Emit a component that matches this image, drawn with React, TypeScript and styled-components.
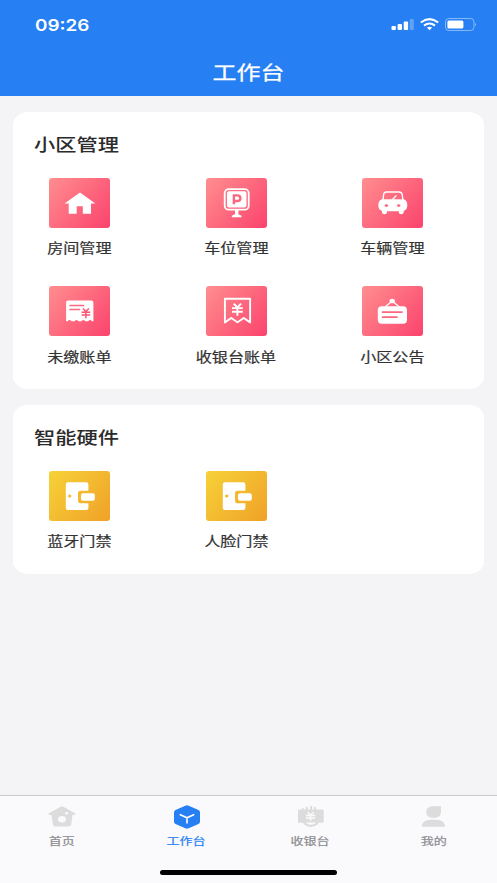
import React from 'react';
import styled, { createGlobalStyle } from 'styled-components';

const GlobalStyle = createGlobalStyle`
  * { box-sizing: border-box; }
  body { margin: 0; background: #f4f4f7; }
`;

const Page = styled.div`
  display: flex;
  flex-direction: column;
  width: 497px;
  height: 883px;
  overflow: hidden;
  background: #f4f4f7;
  font-family: 'Noto Sans CJK SC', 'Liberation Sans', sans-serif;
`;

const Header = styled.header`
  height: 96px;
  flex: none;
  background: #2680f3;
  color: #fff;
`;

const StatusBar = styled.div`
  display: flex;
  align-items: center;
  justify-content: space-between;
  height: 49px;
  padding: 0 20px 0 35px;
`;

const Time = styled.div`
  font: 600 16px/20px Inter, 'Liberation Sans', sans-serif;
  transform: scaleX(1.18);
  transform-origin: left center;
`;

const StatusIcons = styled.div`
  display: flex;
  align-items: center;
  gap: 6px;
  svg { display: block; }
`;

/* Wide lettering shared by every heading and caption */
const Wide = styled.span<{ $from?: string }>`
  display: inline-block;
  white-space: nowrap;
  transform: scaleX(1.22);
  transform-origin: ${(p) => p.$from ?? 'center'};
`;

const NavTitle = styled.h1`
  margin: 0;
  font-size: 19.7px;
  font-weight: 400;
  line-height: 46px;
  text-align: center;
  -webkit-text-stroke: 0.25px currentColor;
`;

const Main = styled.main`
  flex: 1;
  display: flex;
  flex-direction: column;
  gap: 16px;
  padding: 16px 13px;
`;

const Card = styled.section<{ $height: number }>`
  height: ${(p) => p.$height}px;
  padding: 19px 0 0 20.5px;
  border-radius: 15px / 13px;
  background: #fff;
`;

const CardTitle = styled.h2`
  margin: 0 0 21.6px;
  font-size: 17.4px;
  font-weight: 500;
  line-height: 25px;
  color: #2b2b2b;
`;

const Grid = styled.div`
  display: grid;
  grid-template-columns: repeat(3, 61px);
  column-gap: 95.5px;
  row-gap: 28.5px;
  padding-left: 15.5px;
`;

const Entry = styled.div`
  display: flex;
  flex-direction: column;
  align-items: center;
  height: 80px;
`;

const Tile = styled.div<{ $tone: 'pink' | 'gold' }>`
  width: 61px;
  height: 50px;
  flex: none;
  border-radius: 3px;
  background: ${(p) =>
    p.$tone === 'pink'
      ? 'linear-gradient(130deg, #ff8e8f 0%, #fb436d 100%)'
      : 'linear-gradient(130deg, #f6d238 0%, #f0a128 100%)'};
  svg { display: block; }
`;

const Label = styled.div`
  margin-top: 10.5px;
  font-size: 13.2px;
  font-weight: 400;
  line-height: 20px;
  color: #333;
  -webkit-text-stroke: 0.2px currentColor;
`;

const TabBar = styled.nav`
  flex: none;
  height: 88px;
  display: flex;
  flex-direction: column;
  justify-content: space-between;
  align-items: center;
  border-top: 1px solid #c9c9cc;
  background: #fafafc;
`;

const Tabs = styled.div`
  display: grid;
  grid-template-columns: repeat(4, 124px);
  width: 497px;
`;

const Tab = styled.div<{ $active?: boolean }>`
  display: flex;
  flex-direction: column;
  align-items: center;
  padding-top: 8.5px;
  font-size: 10.7px;
  line-height: 16px;
  color: ${(p) => (p.$active ? '#2680f3' : '#8c8c8f')};
  -webkit-text-stroke: 0.2px currentColor;
  svg { display: block; margin-bottom: 4px; }
`;

const HomeIndicator = styled.div`
  width: 177px;
  height: 5px;
  margin-bottom: 8px;
  border-radius: 3px;
  background: #000;
`;

const PINK = '#fb6880';

const Yen = ({ x, y, w, h, color, stroke }: { x: number; y: number; w: number; h: number; color: string; stroke: number }) => (
  <path
    d={`M${x + w * 0.16} ${y} L${x + w / 2} ${y + h * 0.32} L${x + w * 0.84} ${y} M${x + w / 2} ${y + h * 0.32} V${y + h} M${x} ${y + h * 0.37} H${x + w} M${x} ${y + h * 0.67} H${x + w}`}
    fill="none"
    stroke={color}
    strokeWidth={stroke}
  />
);

const Glyph = ({ children }: { children: React.ReactNode }) => (
  <svg width="61" height="50" viewBox="0 0 61 50" fill="#fff">{children}</svg>
);

const HouseIcon = () => (
  <Glyph>
    <path d="M31 14.5 L46.3 25.6 H42 V35.7 H33.8 V28.3 H27.7 V35.7 H19.7 V25.6 H15.5 Z" />
  </Glyph>
);

const ParkingIcon = () => (
  <Glyph>
    <rect x="18.7" y="11.1" width="24" height="20.6" rx="4" fill="none" stroke="#fff" strokeWidth="1.8" />
    <rect x="21" y="13.2" width="19.5" height="16.4" rx="2" />
    <path d="M27.9 26.3 V17.4 H31.4 C35.4 17.4 35.4 23 31.4 23 H28" fill="none" stroke={PINK} strokeWidth="2.4" />
    <path d="M29 31.5 H32.4 V36.2 L35.5 37.7 V39.2 H25.8 V37.7 L29 36.2 Z" />
  </Glyph>
);

const CarIcon = () => (
  <Glyph>
    <path d="M21 22 L21.6 16.5 Q22 14 24.5 14 H37 Q39.7 14 40.2 16.5 L40.9 22" fill="none" stroke="#fff" strokeWidth="1.4" />
    <path d="M30.5 21.5 L34.4 17.6" stroke="#fff" strokeWidth="1.4" />
    <path d="M20 21.2 H41.6 Q45.3 22 45.3 27.5 Q45.3 31.5 41.7 33 V34.3 Q41.7 36.3 39.2 36.3 Q36.8 36.3 36.8 34.3 V33.3 H25 V34.3 Q25 36.3 22.5 36.3 Q20 36.3 20 34.3 V33 Q16.3 31.5 16.3 27.5 Q16.3 22 20 21.2 Z" />
    <ellipse cx="24.4" cy="27.6" rx="1.7" ry="1.4" fill={PINK} />
    <ellipse cx="36.7" cy="27.6" rx="1.7" ry="1.4" fill={PINK} />
  </Glyph>
);

const BillIcon = () => (
  <Glyph>
    <path d="M19 14.4 H42.4 Q44.4 14.4 44.4 16.4 V35.3 H43 Q41.2 32.7 39.3 35.3 H36.2 Q34.4 32.7 32.5 35.3 H29.4 Q27.5 32.7 25.6 35.3 H22.4 Q20.5 32.7 18.6 35.3 H17.1 V16.4 Q17.1 14.4 19 14.4 Z" />
    <path d="M21 19.4 H34.6 M21 23.6 H30.5" stroke={PINK} strokeWidth="1.5" strokeLinecap="round" />
    <Yen x={32.6} y={22.5} w={8.6} h={9.8} color="#fb5574" stroke={1.5} />
  </Glyph>
);

const ReceiptIcon = () => (
  <Glyph>
    <path d="M18.9 12.8 H44.1 V36.4 L37.8 32 L31.5 36.2 L25.2 32 L18.9 36.4 Z" fill="none" stroke="#fff" strokeWidth="1.9" strokeLinejoin="round" />
    <Yen x={26} y={17.6} w={10.8} h={12.2} color="#fff" stroke={1.9} />
  </Glyph>
);

const NoticeIcon = () => (
  <Glyph>
    <path d="M23.3 20.8 L30.2 15 L37.2 20.8" fill="none" stroke="#fff" strokeWidth="1.3" />
    <ellipse cx="30.2" cy="15" rx="2.7" ry="2.3" />
    <rect x="15.8" y="20.2" width="29.2" height="17.5" rx="4" />
    <path d="M20.5 26.1 H40 M20.5 31.1 H35" stroke={PINK} strokeWidth="1.7" strokeLinecap="round" />
  </Glyph>
);

const DoorIcon = () => (
  <Glyph>
    <path d="M19 11.3 H37.3 Q39.4 11.3 39.4 13.4 V19.7 H31.4 Q29 19.7 29 22 V30 Q29 32.3 31.4 32.3 H39.4 V37 Q39.4 39 37.3 39 H19 Q16.8 39 16.8 37 V13.4 Q16.8 11.3 19 11.3 Z" />
    <rect x="32" y="22.3" width="13.8" height="7.4" rx="2" />
    <ellipse cx="20.7" cy="25" rx="1.7" ry="1.5" fill="#f3bc30" />
  </Glyph>
);

const TabGlyph = ({ children }: { children: React.ReactNode }) => (
  <svg width="30" height="24" viewBox="0 0 30 24" fill="#dcdcdd">{children}</svg>
);

const TabHome = () => (
  <TabGlyph>
    <path d="M13.7 1.7 Q15 .8 16.3 1.7 L28.6 8.6 Q29.1 9.6 27.5 9.8 L25.5 10.1 L24.2 19.6 Q23.9 21.6 21.5 21.6 H8.5 Q6.2 21.6 5.9 19.6 L4.5 10.1 L2.2 9.8 Q.8 9.5 1.5 8.6 Z" />
    <ellipse cx="15" cy="14.2" rx="4" ry="3.3" fill="#fafafc" />
    <ellipse cx="19.6" cy="8.2" rx="1.5" ry="1.2" fill="#fafafc" />
  </TabGlyph>
);

const TabWork = () => (
  <TabGlyph>
    <path d="M14.3 .7 Q16 -.1 17.7 .7 L27.5 5.1 Q29 5.9 29 7.3 V16.7 Q29 18.1 27.5 18.9 L17.7 23.3 Q16 24.1 14.3 23.3 L4.5 18.9 Q3 18.1 3 16.7 V7.3 Q3 5.9 4.5 5.1 Z" fill="#2680f3" />
    <path d="M9.3 9.7 L16 12.8 L22.7 9.7 M16 12.8 V18" fill="none" stroke="#fff" strokeWidth="1.6" strokeLinecap="round" />
  </TabGlyph>
);

const TabCash = () => (
  <TabGlyph>
    <path d="M7.8 6 V4 M11.8 6 V2.7 M16.2 6 V1.7 M20 6 V2.7" stroke="#dcdcdd" strokeWidth="2" strokeLinecap="round" />
    <path d="M4 4.5 H27.7 Q28.7 4.5 28.7 5.5 V16.8 Q28.7 17.8 27.7 17.8 H23.7 Q21.5 21.9 15.8 21.9 Q10.2 21.9 8 17.8 H4 Q3 17.8 3 16.8 V5.5 Q3 4.5 4 4.5 Z" />
    <Yen x={11} y={7.2} w={9.2} h={8.8} color="#fafafc" stroke={1.5} />
    <path d="M10.5 17.6 H21.3 Q19.5 19.8 15.9 19.8 Q12.4 19.8 10.5 17.6 Z" fill="#fafafc" />
  </TabGlyph>
);

const TabMe = () => (
  <TabGlyph>
    <path d="M22 1.2 V7.2 Q21.5 12.9 14.5 12.9 Q7.2 12.9 7.2 7.1 Q7.2 1.2 14.8 1.2 Z" />
    <path d="M2.8 21.8 Q3.2 14.8 12 14.8 H17 Q25.5 14.8 26 21.8 Z" />
  </TabGlyph>
);

const Signal = () => (
  <svg width="23" height="13" viewBox="0 0 23 13" fill="#fff">
    <rect x=".5" y="8" width="4.4" height="4" rx="1" />
    <rect x="6.6" y="6" width="4.4" height="6" rx="1" />
    <rect x="12.7" y="3.6" width="4.4" height="8.4" rx="1" />
    <rect x="18.7" y="1" width="4.1" height="11" rx="1" opacity=".27" />
  </svg>
);

const Wifi = () => (
  <svg width="19" height="13" viewBox="0 0 19 13" fill="none" stroke="#fff" strokeWidth="2.1">
    <path d="M.8 4.5 Q9.5 -2.2 18.2 4.5" />
    <path d="M4 7.6 Q9.5 3.4 15 7.6" />
    <path d="M6.8 9.6 Q9.5 7.8 12.2 9.6 L9.5 12.2 Z" fill="#fff" stroke="none" />
  </svg>
);

const Battery = () => (
  <svg width="32" height="13" viewBox="0 0 32 13">
    <rect x=".5" y=".5" width="28.5" height="12" rx="3.4" fill="none" stroke="#fff" strokeOpacity=".45" />
    <rect x="2.4" y="2.4" width="16" height="8.2" rx="1.6" fill="#fff" />
    <path d="M30.2 4.7 Q32 6.5 30.2 8.4 Z" fill="#fff" opacity=".55" />
  </svg>
);

type Item = { label: string; Icon: () => React.ReactElement };

const community: Item[] = [
  { label: '房间管理', Icon: HouseIcon },
  { label: '车位管理', Icon: ParkingIcon },
  { label: '车辆管理', Icon: CarIcon },
  { label: '未缴账单', Icon: BillIcon },
  { label: '收银台账单', Icon: ReceiptIcon },
  { label: '小区公告', Icon: NoticeIcon },
];

const hardware: Item[] = [
  { label: '蓝牙门禁', Icon: DoorIcon },
  { label: '人脸门禁', Icon: DoorIcon },
];

const tabs: Item[] = [
  { label: '首页', Icon: TabHome },
  { label: '工作台', Icon: TabWork },
  { label: '收银台', Icon: TabCash },
  { label: '我的', Icon: TabMe },
];

const Section = ({ title, items, tone, height }: { title: string; items: Item[]; tone: 'pink' | 'gold'; height: number }) => (
  <Card $height={height}>
    <CardTitle><Wide $from="left center">{title}</Wide></CardTitle>
    <Grid>
      {items.map(({ label, Icon }) => (
        <Entry key={label}>
          <Tile $tone={tone}><Icon /></Tile>
          <Label><Wide>{label}</Wide></Label>
        </Entry>
      ))}
    </Grid>
  </Card>
);

export default function App() {
  return (
    <Page>
      <GlobalStyle />
      <Header>
        <StatusBar>
          <Time>09:26</Time>
          <StatusIcons><Signal /><Wifi /><Battery /></StatusIcons>
        </StatusBar>
        <NavTitle><Wide>工作台</Wide></NavTitle>
      </Header>
      <Main>
        <Section title="小区管理" items={community} tone="pink" height={277} />
        <Section title="智能硬件" items={hardware} tone="gold" height={169} />
      </Main>
      <TabBar>
        <Tabs>
          {tabs.map(({ label, Icon }) => (
            <Tab key={label} $active={label === '工作台'}>
              <Icon />
              <Wide>{label}</Wide>
            </Tab>
          ))}
        </Tabs>
        <HomeIndicator />
      </TabBar>
    </Page>
  );
}
